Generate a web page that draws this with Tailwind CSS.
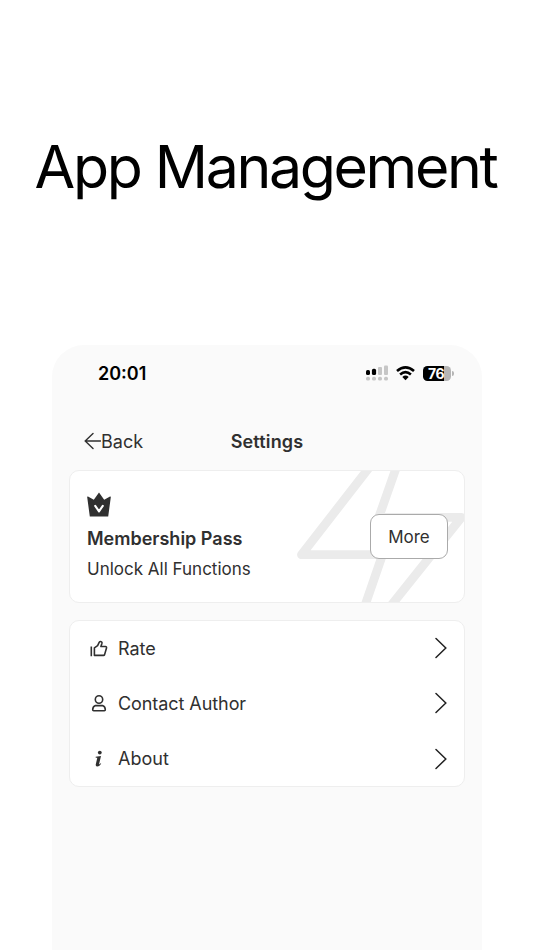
<!DOCTYPE html>
<html lang="en">
<head>
    <meta charset="UTF-8">
    <meta name="viewport" content="width=device-width, initial-scale=1.0">
    <title>App Management</title>
    <script src="https://cdn.jsdelivr.net/npm/@tailwindcss/browser@4"></script>
</head>
<body class="bg-white h-[950px] overflow-hidden font-['Inter',sans-serif] text-[#303030]">
    <h1 class="pt-[131px] pr-[3px] h-[345px] text-center text-[59px] leading-[72px] tracking-[-2.35px] whitespace-nowrap text-black">App Management</h1>

    <main class="ml-[52px] w-[430px] h-[605px] px-[17px] rounded-t-[32px] bg-[#fafafa]">
        <!-- Status bar -->
        <div class="h-14 pl-[29px] pr-[14px] flex items-center justify-between text-black">
            <span class="text-[18px] font-semibold">20:01</span>
            <div class="flex items-center">
                <svg class="w-[22px] h-4 mr-2" viewBox="0 0 22 16">
                    <g fill="#000"><rect x="0" y="5" width="4" height="5" rx="1.6"/><rect x="5.9" y="3.8" width="4.2" height="6.2" rx="1.6"/></g>
                    <g fill="#c6c6c6"><rect x="12" y="2" width="4" height="8" rx="1"/><rect x="18" y="0.5" width="4" height="9.5" rx="1"/><rect x="0" y="11.8" width="4" height="3.8" rx="1.7"/><rect x="6" y="11.8" width="4" height="3.8" rx="1.7"/><rect x="12" y="11.8" width="4" height="3.8" rx="1.7"/><rect x="18" y="11.8" width="4" height="3.8" rx="1.7"/></g>
                </svg>
                <svg class="w-[19px] h-4 mr-2" viewBox="0 0 19 16" fill="none" stroke="#000" stroke-width="2.6">
                    <path d="M1 6Q9.5-1.4 18 6M4.1 9.4Q9.5 4.7 14.9 9.4"/>
                    <path d="M6.3 12Q9.5 9.2 12.7 12L9.5 15.2Z" fill="#000" stroke="none"/>
                </svg>
                <div class="relative w-7 h-[15px] rounded-[4.5px] bg-linear-to-r from-black from-76% to-[#b5b5b5] to-76% text-white text-[14px] leading-[15px] font-bold">
                    <span class="pl-[5px] tracking-[-0.3px]">76</span>
                    <span class="absolute -right-[2.5px] top-[5px] w-[1.5px] h-[5px] rounded-r-full bg-[#b5b5b5]"></span>
                </div>
            </div>
        </div>

        <!-- Navigation -->
        <div class="relative h-[69px] pt-[27px] flex justify-center text-[18px] leading-[27px]">
            <button class="absolute left-[15px] top-[27px] flex items-center">
                <svg class="w-[17px] h-[18px] -mt-px" viewBox="0 0 17 18" fill="none" stroke="#303030" stroke-width="1.4" stroke-linecap="round"><path d="M9 1.5L1.2 9L9 16.5M1.2 9H16.5"/></svg>
                Back
            </button>
            <h2 class="font-semibold tracking-[0.15px]">Settings</h2>
        </div>

        <!-- Membership -->
        <section class="relative h-[133px] rounded-[10px] border border-[#eeeeee] bg-white overflow-hidden">
            <svg class="absolute left-[210px] top-0 w-[184px] h-[131px]" viewBox="280 471 184 131" fill="none" stroke="#ebebeb" stroke-width="8.8" stroke-linejoin="round">
                <path d="M373.5 462L301.5 554.7H382.5L360 620"/>
                <path d="M398.2 462L378.8 517.3H461.5L379.5 620"/>
            </svg>
            <div class="pt-[21px] pl-[17px]">
                <svg class="w-6 h-[25px]" viewBox="0 0 24 25" fill="#303030">
                    <path d="M1 4.5L6.8 7.8L12 .4L17.2 7.8L23 4.5Q24 4.2 23.8 5.3L21.2 24.4H2.8L.2 5.3Q0 4.2 1 4.5Z"/>
                    <path d="M8.2 13.8L12 19.3L15.8 13.8" fill="none" stroke="#fff" stroke-width="2.1" stroke-linecap="round" stroke-linejoin="round"/>
                </svg>
                <h3 class="mt-2 text-[18px] leading-[27px] font-semibold">Membership Pass</h3>
                <p class="mt-[4px] text-[17px] leading-[27px]">Unlock All Functions</p>
            </div>
            <button class="absolute right-[16px] top-[43px] w-[78px] h-[45px] pt-0.5 rounded-[9px] border border-[#aaa] bg-white text-[17px]">More</button>
        </section>

        <!-- Options -->
        <ul class="mt-[17px] h-[167px] rounded-[10px] border border-[#eeeeee] bg-white text-[18px]">
            <li class="h-[55px] pl-[20px] pr-[17px] flex items-center">
                <svg class="w-[18px] h-[18px] mr-[10px]" viewBox="0 0 18 18" fill="none" stroke="#303030" stroke-width="1.6" stroke-linejoin="round"><path d="M1.3 6.6V16.2M4.4 15.4V7.8L7.6 5.6L9.3 2.2Q10.3.8 11.7 2Q12.2 2.6 11.9 3.6L10.9 6.5H15.4Q16.8 6.7 16.5 8L14.6 14.6Q14.3 15.4 13.5 15.4Z"/></svg>
                <span>Rate</span>
                <svg class="ml-auto -mt-px w-3 h-[22px]" viewBox="0 0 12 22" fill="none" stroke="#222" stroke-width="1.5" stroke-linecap="round"><path d="M1 1.5L10.8 11L1 20.5"/></svg>
            </li>
            <li class="h-[55px] pl-[20px] pr-[17px] flex items-center">
                <svg class="w-[18px] h-[18px] mr-[10px]" viewBox="0 0 18 18" fill="none" stroke="#303030" stroke-width="1.6" stroke-linejoin="round"><circle cx="9" cy="4.5" r="3.7"/><path d="M5.5 10.6H12.5Q15.3 11.6 15.3 14.8Q15.3 15.8 14.3 15.8H3.7Q2.7 15.8 2.7 14.8Q2.7 11.6 5.5 10.6Z"/></svg>
                <span class="tracking-[-0.07px]">Contact Author</span>
                <svg class="ml-auto -mt-px w-3 h-[22px]" viewBox="0 0 12 22" fill="none" stroke="#222" stroke-width="1.5" stroke-linecap="round"><path d="M1 1.5L10.8 11L1 20.5"/></svg>
            </li>
            <li class="h-[55px] pl-[20px] pr-[17px] flex items-center">
                <svg class="w-[18px] h-[18px] mr-[10px]" viewBox="0 0 18 18" fill="#303030"><circle cx="9.8" cy="2.6" r="1.9"/><path d="M5.7 6.8L11 5.9L9 14.4Q9.8 14.1 10.7 13.2L11.2 13.7Q9.3 16.6 7 16.4Q5.4 16.1 5.8 14.3L7.3 7.7H5.7Z"/></svg>
                <span>About</span>
                <svg class="ml-auto w-3 h-[22px]" viewBox="0 0 12 22" fill="none" stroke="#222" stroke-width="1.5" stroke-linecap="round"><path d="M1 1.5L10.8 11L1 20.5"/></svg>
            </li>
        </ul>
    </main>
</body>
</html>
